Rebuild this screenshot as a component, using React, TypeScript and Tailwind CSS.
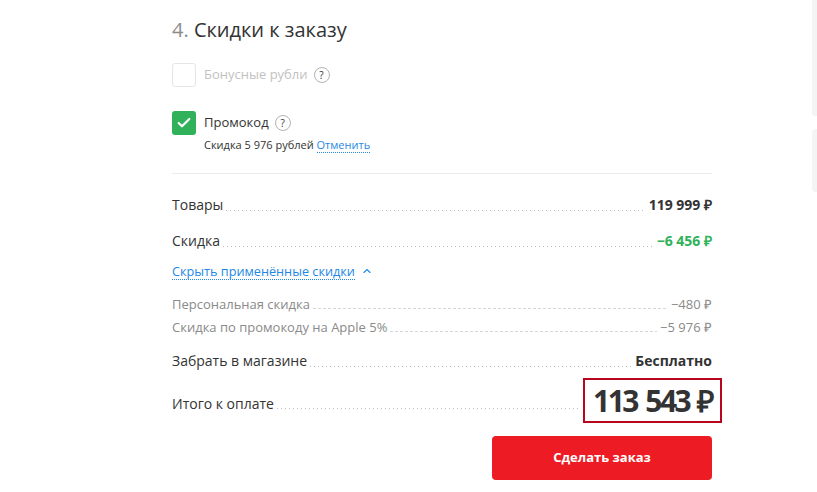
import { Check, ChevronUp } from "lucide-react";

function Hint() {
  return (
    <span className="ml-[6px] flex h-4 w-4 items-center justify-center rounded-full border border-[#b3b3b3] text-[10px] leading-none text-[#333]">
      ?
    </span>
  );
}

function Row({
  label,
  value,
  className,
  valueClass,
  dashed,
}: {
  label: string;
  value: string;
  className: string;
  valueClass: string;
  dashed?: boolean;
}) {
  return (
    <div className={`flex items-end ${className}`}>
      <span className="shrink-0">{label}</span>
      <span
        className={`mx-[3px] h-px flex-1 bg-repeat-x ${
          dashed
            ? "mb-[5px] bg-[linear-gradient(to_right,#d6d6d6_3px,transparent_3px)] bg-[length:5px_1px]"
            : "mb-[6px] bg-[linear-gradient(to_right,#bdbdbd_1px,transparent_1px)] bg-[length:4px_1px]"
        }`}
      />
      <span className={`shrink-0 ${valueClass}`}>{value}</span>
    </div>
  );
}

export default function App() {
  return (
    <div className="flex h-[492px] w-[817px] overflow-hidden bg-white font-['Open_Sans',sans-serif] text-[#333]">
      <main className="ml-[172px] flex w-[540px] flex-col">
        <h2 className="mt-[16px] text-[20px] leading-[28px]">
          <span className="text-[#8c8c8c]">4.</span> Скидки к заказу
        </h2>

        <label className="mt-[19px] flex h-6 items-center">
          <span className="h-6 w-6 rounded-[3px] border border-[#e6e6e6] bg-white" />
          <span className="ml-2 text-[13px] text-[#c2c2c2]">Бонусные рубли</span>
          <Hint />
        </label>

        <label className="mt-[24px] flex h-6 items-center">
          <span className="flex h-6 w-6 items-center justify-center rounded-[3px] bg-[#31b25a]">
            <Check className="h-4 w-4 text-white" strokeWidth={3.2} />
          </span>
          <span className="ml-2 text-[13px]">Промокод</span>
          <Hint />
        </label>
        <p className="mt-[2px] pl-8 text-[11px] leading-4">
          Скидка 5 976 рублей{" "}
          <span className="border-b border-dotted border-[#1e88e5] text-[#1e88e5]">Отменить</span>
        </p>

        <hr className="mt-[20px] border-[#ebebeb]" />

        <Row
          label="Товары"
          value="119 999 ₽"
          className="mt-[19px] h-6 text-[14px] leading-6"
          valueClass="font-bold"
        />
        <Row
          label="Скидка"
          value="−6 456 ₽"
          className="mt-[12px] h-6 text-[14px] leading-6"
          valueClass="font-bold text-[#31b25a]"
        />

        <div className="mt-[8px] flex h-5 items-center text-[12.7px] leading-5 text-[#1e88e5]">
          <span className="border-b border-dotted border-[#1e88e5] leading-4">
            Скрыть применённые скидки
          </span>
          <ChevronUp className="ml-[6px] h-3 w-3" strokeWidth={2.2} />
        </div>

        <Row
          label="Персональная скидка"
          value="−480 ₽"
          dashed
          className="mt-[13px] h-5 text-[13px] leading-5 text-[#8a8a8a]"
          valueClass=""
        />
        <Row
          label="Скидка по промокоду на Apple 5%"
          value="−5 976 ₽"
          dashed
          className="mt-[3px] h-5 text-[13px] leading-5 text-[#8a8a8a]"
          valueClass=""
        />

        <Row
          label="Забрать в магазине"
          value="Бесплатно"
          className="mt-[12px] h-6 text-[14px] leading-6"
          valueClass="font-bold"
        />

        <div className="mt-[5px] flex h-[45px] items-end text-[14px]">
          <span className="mb-[9px] shrink-0 leading-5">Итого к оплате</span>
          <span className="mx-[3px] mb-[14px] h-px flex-1 bg-[linear-gradient(to_right,#bdbdbd_1px,transparent_1px)] bg-[length:4px_1px] bg-repeat-x" />
          <span className="-mr-[10px] flex h-[45px] w-[139px] shrink-0 items-center justify-end border-2 border-[#b8061f] pr-[8px] text-[30px] font-bold leading-none tracking-[-2.5px] [word-spacing:3px]">
            113 543 ₽
          </span>
        </div>

        <button className="ml-auto mt-[13px] h-[44px] w-[220px] rounded-[4px] bg-[#ed1c24] text-[13px] font-bold text-white">
          Сделать заказ
        </button>
      </main>

      <aside className="ml-auto flex w-[5px] flex-col">
        <div className="h-[116px] rounded-bl-[4px] bg-[#f4f4f4]" />
        <div className="mt-[13px] h-[63px] rounded-tl-[4px] rounded-bl-[4px] bg-[#f4f4f4]" />
      </aside>
    </div>
  );
}
